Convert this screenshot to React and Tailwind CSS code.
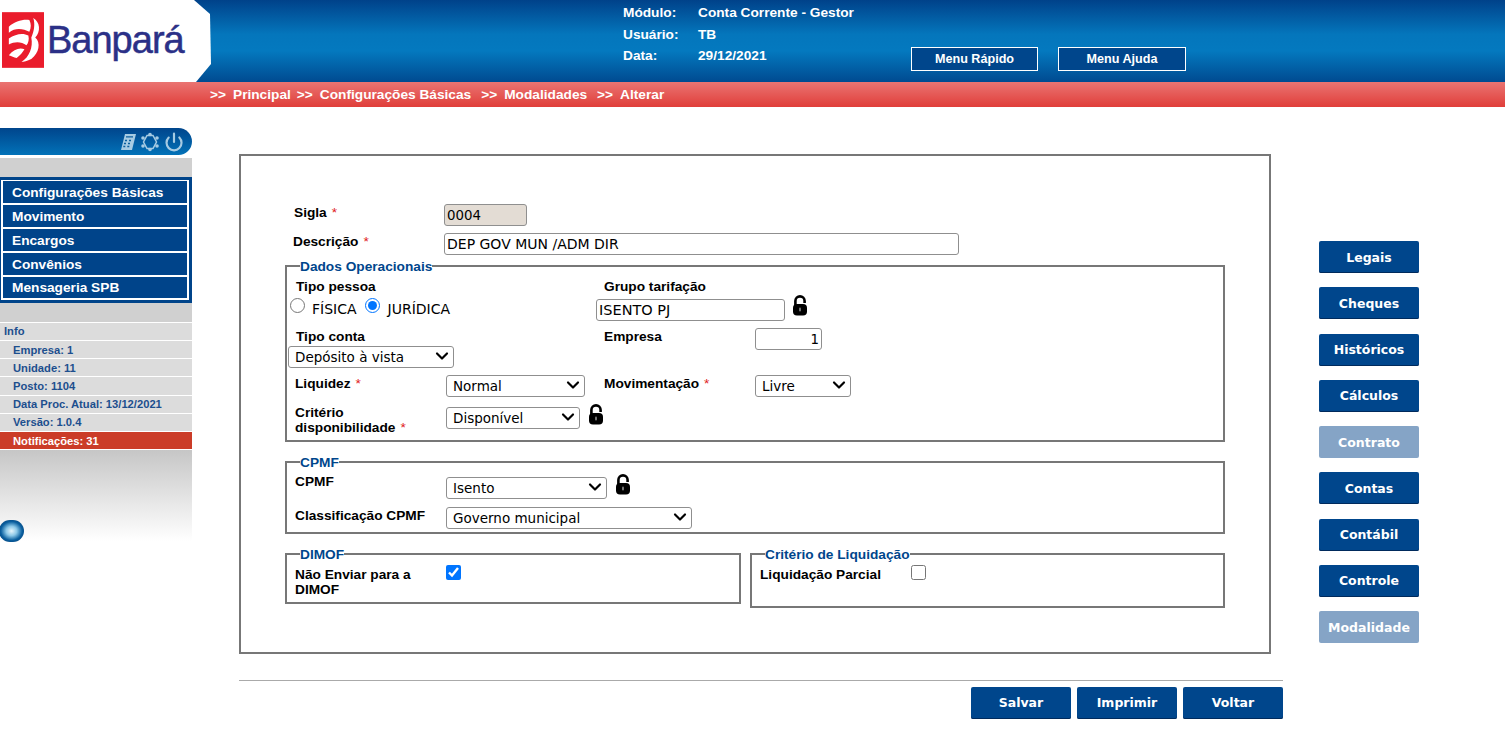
import React from 'react';
import { ChevronDown, Power } from 'lucide-react';

const label = "font-bold text-[13.7px] leading-[15px] text-black whitespace-nowrap pt-[1px]";
const field = "border border-[#8f8f8f] rounded-[3px] text-black h-[22px] font-['DejaVu_Sans',sans-serif]";
const star = <span className="text-[#e02020] font-normal ml-[5px]">*</span>;

function Lock({ className }) {
  return (
    <svg viewBox="0 0 16 21" className={`w-[16px] h-[21px] shrink-0 ${className || ''}`}>
      <path d="M3.4 10V6a4.600 4.600 0 0 1 9.200 0v2" fill="none" stroke="#000" strokeWidth="2.6" />
      <rect x="1" y="9" width="14" height="11.5" rx="4" fill="#000" />
      <rect x="7" y="12.500" width="2" height="4" rx="1" fill="#777" />
    </svg>
  );
}

function Logo() {
  return (
    <div className="w-[212px] h-[82px] shrink-0 bg-white flex items-center pl-[2px] [clip-path:polygon(0_0,194px_0,210px_14px,211px_64px,196px_82px,0_82px)]">
      <svg viewBox="0 0 43 57" className="w-[42px] h-[56px] shrink-0 mt-[-2px]">
        <rect width="43" height="57" fill="#ea1c2c" />
        <path d="M7 15 C13 9 22 7 28 8 C30 12 30 16 28 20 C22 17 14 15 7 21Z" fill="#fff" />
        <path d="M7 27 C14 22 22 21 27 24 C28 28 27 32 25 34 C20 30 13 30 7 33Z" fill="#fff" />
        <path d="M7 44 C12 38 18 36 23 38 C21 41 19 44 15 47 C12 46 10 45 7 44Z" fill="#fff" />
        <path d="M32 6 C39 10 40 20 34 26 C40 31 38 42 30 48 C26 50 22 51 20 51 C28 46 32 36 30 26 C33 19 34 12 32 6Z" fill="#fff" />
      </svg>
      <span className="text-[38px] leading-none font-normal tracking-[-1px] text-[#2b3087] [-webkit-text-stroke:0.5px_#2b3087] ml-[3px] mb-[3px]">Banpará</span>
    </div>
  );
}

function Header() {
  return (
    <div className="flex h-[82px] bg-[linear-gradient(#00428a_0%,#0476bc_42%,#0479bf_62%,#004a90_100%)] text-white font-bold text-[13.7px]">
      <Logo />
      <div className="w-[288px] ml-[411px] pt-[2px] shrink-0">
        <div className="flex h-[22px] items-center"><span className="w-[75px]">Módulo:</span><span>Conta Corrente - Gestor</span></div>
        <div className="flex h-[22px] items-center"><span className="w-[75px]">Usuário:</span><span>TB</span></div>
        <div className="flex h-[20px] items-center"><span className="w-[75px]">Data:</span><span>29/12/2021</span></div>
      </div>
      <div className="flex gap-[20px] mt-[47px] h-[24px]">
        <div className="w-[127px] border border-white bg-[#00468c] text-[12.6px] flex items-center justify-center">Menu Rápido</div>
        <div className="w-[128px] border border-white bg-[#00468c] text-[12.6px] flex items-center justify-center">Menu Ajuda</div>
      </div>
    </div>
  );
}

function Breadcrumb() {
  const items = ['Principal', 'Configurações Básicas', 'Modalidades', 'Alterar'];
  return (
    <div className="h-[25px] pl-[210px] pt-[1px] flex items-center gap-[10px] bg-[linear-gradient(#ea7472,#e03e3a)] text-white font-bold text-[13.7px]">
      {items.map((it) => (
        <span key={it} className="first:-mr-[4px]">{'>>'}<span className="ml-[7px]">{it}</span></span>
      ))}
    </div>
  );
}

function Sidebar() {
  const menu = ['Configurações Básicas', 'Movimento', 'Encargos', 'Convênios', 'Mensageria SPB'];
  const info = ['Empresa: 1', 'Unidade: 11', 'Posto: 1104', 'Data Proc. Atual: 13/12/2021', 'Versão: 1.0.4'];
  return (
    <div className="w-[192px] shrink-0 mt-[21px]">
      <div className="h-[27px] rounded-r-[14px] bg-[linear-gradient(#00458c,#0272b8)] flex items-center justify-end pr-[8px] gap-[4px] text-[#a6cbe3]">
        <svg viewBox="0 0 16 18" className="w-[16px] h-[18px]">
          <path d="M5 1h11l-4 16H1z" fill="#a6cbe3" />
          <path d="M6 3.800h7M5 7.500h2M9 7.500h2M4 10.500h2M8 10.500h2M3.300 13.500h2M7.300 13.500h2" stroke="#0a5f9f" strokeWidth="1.300" />
        </svg>
        <svg viewBox="0 0 20 20" className="w-[20px] h-[20px]" fill="none" stroke="#a6cbe3" strokeWidth="1.500">
          <path d="M7 3.500h6l3.500 6.500-3.500 6.500H7L3.500 10z" />
          <g fill="#a6cbe3" stroke="none">
            <circle cx="10" cy="2.500" r="1.800" /><circle cx="17" cy="6" r="1.800" /><circle cx="17" cy="14" r="1.800" />
            <circle cx="10" cy="17.500" r="1.800" /><circle cx="3" cy="14" r="1.800" /><circle cx="3" cy="6" r="1.800" />
          </g>
        </svg>
        <Power size={20} strokeWidth={2.6} />
      </div>
      <div className="mt-[3px] h-[19px] bg-[#d0d0d0]" />
      <div className="bg-[#00448a] py-[3px]">
        <div className="ml-[1px] mr-[3px] border-t border-white border-x-2">
          {menu.map((m) => (
            <div key={m} className="h-[24px] border-b-2 border-white pl-[9px] pt-[2px] flex items-center text-white font-bold text-[13.7px] last:h-[23px] last:pt-[1px]">{m}</div>
          ))}
        </div>
      </div>
      <div className="h-[19px] bg-[#d0d0d0]" />
      <div className="h-[18px] bg-[#dcdcdc] border-t border-white pl-[4px] flex items-center text-[#1c4f8e] font-bold text-[11.2px]">Info</div>
      {info.map((i) => (
        <div key={i} className="h-[18.2px] bg-[#dcdcdc] border-t border-white pl-[13px] pt-[1px] flex items-center text-[#1c4f8e] font-bold text-[11.2px]">{i}</div>
      ))}
      <div className="h-[19px] bg-[#cb3c28] border-y border-white pl-[13px] pt-[1px] flex items-center text-white font-bold text-[11.2px]">Notificações: 31</div>
      <div className="h-[91px] bg-[linear-gradient(#c6c6c6,#ffffff)] flex items-end">
        <div className="w-[25px] h-[22px] -ml-[1px] -mb-[1px] rounded-full bg-[radial-gradient(ellipse_at_center,#e6f5fc_0%,#8cc8e8_30%,#0a5f9f_60%,#022f60_100%)]" />
      </div>
    </div>
  );
}

function Group({ title, className, children }) {
  return (
    <fieldset className={`border-2 border-[#777] ${className}`}>
      <legend className="ml-[13px] translate-y-[1px] text-[#00468c] font-bold text-[13.7px] leading-[16px]">{title}</legend>
      {children}
    </fieldset>
  );
}

function Select({ value, className }) {
  return (
    <div className={`relative shrink-0 h-[22px] ${className}`}>
      <select defaultValue={value} className={`${field} w-full appearance-none bg-white pl-[6px] text-[13.5px]`}>
        <option>{value}</option>
      </select>
      <ChevronDown size={20} strokeWidth={2.6} className="absolute right-[2px] top-[1px] text-black pointer-events-none" />
    </div>
  );
}

function Form() {
  return (
    <div className="h-[500px] w-[1032px] border-2 border-[#777] px-[44px] pt-[48px]">
      <div className="flex h-[22px]">
        <div className={`${label} w-[159px] pl-[9px]`}>Sigla{star}</div>
        <input readOnly value="0004" className={`${field} w-[83px] pl-[2px] bg-[#e3dcd4] text-[13.33px]`} />
      </div>
      <div className="flex h-[22px] mt-[7px]">
        <div className={`${label} w-[159px] pl-[8px]`}>Descrição{star}</div>
        <input readOnly value="DEP GOV MUN /ADM DIR" className={`${field} w-[515px] pl-[2px] bg-white text-[14px]`} />
      </div>

      <Group title="Dados Operacionais" className="mt-[3px] h-[184px] w-[940px]">
        <div className="flex h-[94px]">
          <div className="w-[309px] shrink-0">
            <div className={`${label} pl-[9px] mt-[4px]`}>Tipo pessoa</div>
            <div className="flex items-center h-[16px] mt-[7px] text-[14px] text-black font-['DejaVu_Sans',sans-serif]">
              <input type="radio" readOnly name="pessoa" className="w-[15px] h-[15px] ml-[3px] -mt-[8px]" />
              <span className="ml-[7px]">FÍSICA</span>
              <input type="radio" readOnly checked name="pessoa" className="w-[15px] h-[15px] ml-[8px] -mt-[8px]" />
              <span className="ml-[8px]">JURÍDICA</span>
            </div>
            <div className={`${label} pl-[9px] mt-[11px]`}>Tipo conta</div>
            <Select value="Depósito à vista" className="w-[166px] ml-[1px] mt-[1px]" />
          </div>
          <div>
            <div className={`${label} pl-[8px] mt-[4px]`}>Grupo tarifação</div>
            <div className="flex mt-[5px]">
              <input readOnly value="ISENTO PJ" className={`${field} w-[189px] pl-[2px] bg-white text-[14.5px]`} />
              <Lock className="ml-[7px] -mt-[4px]" />
            </div>
            <div className="flex mt-[7px]">
              <div className={`${label} w-[159px] pl-[8px]`}>Empresa</div>
              <input readOnly value="1" className={`${field} w-[67px] text-right pr-[2px] bg-white text-[13.33px]`} />
            </div>
          </div>
        </div>
        <div className="flex mt-[6px] h-[22px]">
          <div className={`${label} w-[159px] pl-[8px] !pt-[2px]`}>Liquidez{star}</div>
          <Select value="Normal" className="w-[139px]" />
          <div className={`${label} w-[170px] pl-[19px] !pt-[2px]`}>Movimentação{star}</div>
          <Select value="Livre" className="w-[96px]" />
        </div>
        <div className="flex mt-[10px]">
          <div className={`${label} w-[159px] pl-[8px] -mt-[2px]`}>Critério<br />disponibilidade{star}</div>
          <Select value="Disponível" className="w-[134px]" />
          <Lock className="ml-[8px] -mt-[2px]" />
        </div>
      </Group>

      <Group title="CPMF" className="mt-[12px] h-[80px] w-[940px]">
        <div className="flex h-[22px] mt-[2px]">
          <div className={`${label} w-[159px] pl-[8px] !pt-[2px]`}>CPMF</div>
          <Select value="Isento" className="w-[161px] mt-[4px]" />
          <Lock className="ml-[8px] mt-[2px]" />
        </div>
        <div className="flex h-[22px] mt-[12px]">
          <div className={`${label} w-[159px] pl-[8px] !pt-[2px]`}>Classificação CPMF</div>
          <Select value="Governo municipal" className="w-[246px]" />
        </div>
      </Group>

      <div className="flex mt-[12px] items-start">
        <Group title="DIMOF" className="w-[456px] h-[58px]">
          <div className="flex mt-[4px]">
            <div className={`${label} w-[159px] pl-[8px]`}>Não Enviar para a<br />DIMOF</div>
            <input type="checkbox" readOnly checked className="w-[15px] h-[15px] mt-[-1px]" />
          </div>
        </Group>
        <Group title="Critério de Liquidação" className="w-[475px] h-[62px] ml-[9px]">
          <div className="flex mt-[4px]">
            <div className={`${label} w-[159px] pl-[8px]`}>Liquidação Parcial</div>
            <input type="checkbox" readOnly className="w-[15px] h-[15px] mt-[-1px]" />
          </div>
        </Group>
      </div>
    </div>
  );
}

const btn = "w-[100px] h-[32px] rounded-[2px] flex items-center justify-center text-white font-bold text-[12.5px] font-['DejaVu_Sans',sans-serif] shadow-[inset_0_-1px_0_#002a5c]";

export default function App() {
  const side = ['Legais', 'Cheques', 'Históricos', 'Cálculos', 'Contrato', 'Contas', 'Contábil', 'Controle', 'Modalidade'];
  const disabled = ['Contrato', 'Modalidade'];
  return (
    <div className="min-h-[751px] bg-white overflow-hidden font-['Liberation_Sans',Arial,sans-serif]">
      <Header />
      <Breadcrumb />
      <div className="flex">
        <Sidebar />
        <div className="w-[1044px] ml-[47px] mt-[47px] shrink-0">
          <Form />
          <div className="border-t border-[#aaa] mt-[26px] pt-[6px] flex justify-end gap-[6px]">
            {['Salvar', 'Imprimir', 'Voltar'].map((b) => (
              <div key={b} className={`${btn} bg-[#00468c]`}>{b}</div>
            ))}
          </div>
        </div>
        <div className="ml-[36px] mt-[134px] flex flex-col gap-[14.25px]">
          {side.map((b) => (
            <div key={b} className={`${btn} pt-[2px] ${disabled.includes(b) ? 'bg-[#85a4c6] text-[#e4ecf4] shadow-none' : 'bg-[#00468c]'}`}>{b}</div>
          ))}
        </div>
      </div>
    </div>
  );
}
